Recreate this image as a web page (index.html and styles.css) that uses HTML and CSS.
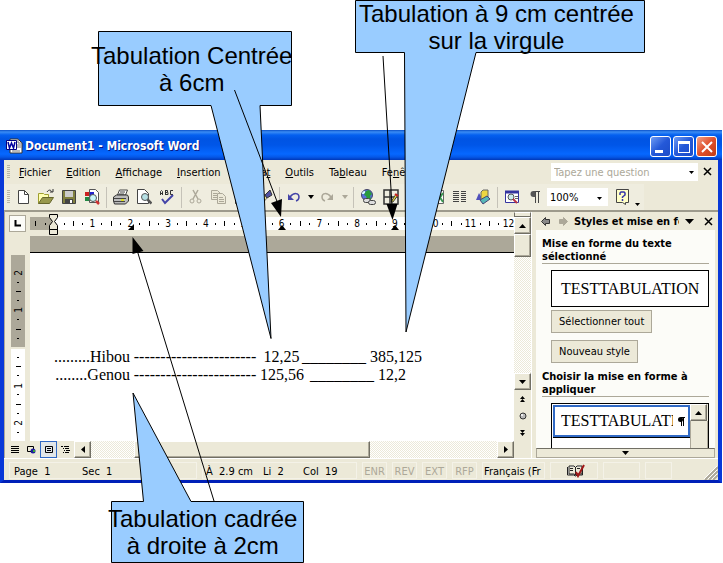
FILE: index.html
```html
<!DOCTYPE html>
<html lang="fr">
<head>
<meta charset="utf-8">
<title>Document1 - Microsoft Word</title>
<link rel="stylesheet" href="styles.css">
</head>
<body>
<main class="scene">
<section class="window">
  <header class="titlebar">
    <svg class="app-icon" width="17" height="16" viewBox="0 0 17 16"><path d="M4 1h8l4 4v10H4z" fill="#fff" stroke="#333"/><path d="M12 1v4h4M11 7h4M11 9h4M6 13h8" fill="none" stroke="#777"/><path d="M0.5 2.500h10v9h-10z" fill="#fff" stroke="#000080"/><path d="M2 4l1.500 6L5.500 5l2 5L9 4" fill="none" stroke="#0000a0" stroke-width="1.500"/></svg>
    <h1>Document1 - Microsoft Word</h1>
    <div class="caption-buttons">
      <button class="caption" aria-label="Réduire"><svg width="20" height="20"><path d="M4 13h8v3H4z" fill="#fff"/></svg></button>
      <button class="caption" aria-label="Agrandir"><svg width="20" height="20"><path d="M4 4h12v12H4zM5 7v8h10V7z" fill="#fff" fill-rule="evenodd"/></svg></button>
      <button class="caption close" aria-label="Fermer"><svg width="20" height="20"><path d="M5 5l10 10M15 5L5 15" stroke="#fff" stroke-width="2"/></svg></button>
    </div>
  </header>

  <nav class="menubar">
    <i class="grip"></i>
    <a href="#"><u>F</u>ichier</a><a href="#"><u>E</u>dition</a><a href="#"><u>A</u>ffichage</a><a href="#"><u>I</u>nsertion</a><a href="#">Forma<u>t</u></a><a href="#"><u>O</u>utils</a><a href="#">Ta<u>b</u>leau</a><a href="#">Fe<u>n</u>être</a>
    <div class="ask"><input type="text" placeholder="Tapez une question" aria-label="Tapez une question"><svg width="14" height="17"><path d="M5 8h5l-2.500 3z"/></svg></div>
    <button class="plain doc-close" aria-label="Fermer le document"><svg width="10" height="10"><path d="M1 1l7 7M8 1L1 8" stroke="#000" stroke-width="1.500"/></svg></button>
  </nav>

  <div class="toolbar">
    <i class="grip"></i>
    <button class="tool" aria-label="Nouveau"><svg width="16" height="16"><path d="M3.500 1.500h6l4 4v9h-10z" fill="#fff" stroke="#444"/><path d="M9.500 1.500v4h4" fill="none" stroke="#444"/></svg></button>
    <button class="tool" aria-label="Ouvrir"><svg width="16" height="16"><path d="M.5 14.500v-10h5l1 1h4v3" fill="#ffffb0" stroke="#a0a030"/><path d="M.5 14.500l4-6h11l-4 6z" fill="#98984c" stroke="#66662c"/><path d="M9 3c2-3 4-2 5 0M12 3h3V0" fill="none" stroke="#333"/></svg></button>
    <button class="tool" aria-label="Enregistrer"><svg width="16" height="16"><path d="M1.500 1.500h13v13h-13z" fill="#808040" stroke="#444"/><path d="M4 2h8v6H4z" fill="#ccc"/><path d="M4 10h8v4H4z" fill="#444"/><path d="M9 11h2v3H9z" fill="#fff"/></svg></button>
    <button class="tool" aria-label="Rechercher"><svg width="16" height="16"><path d="M5.500.5h6l3 3v10h-9z" fill="#fff" stroke="#555"/><path d="M1 3h4v4H1z" fill="#c22"/><path d="M6 3h4v4H6z" fill="#22c"/><path d="M1 8h4v4H1z" fill="#284"/><path d="M6 8h4v4H6z" fill="#fd3"/><circle cx="9" cy="9" r="3.500" fill="#c8f6f8" stroke="#555"/><path d="M12 12l3 3" stroke="#c33" stroke-width="2.500"/></svg></button>
    <i class="sep"></i>
    <button class="tool" aria-label="Imprimer"><svg width="16" height="16"><path d="M4.500 6l2-5h8l-2 5z" fill="#fff" stroke="#444"/><path d="M7 3h5M6 5h5" stroke="#444"/><path d="M.5 8l3-2h11l1 2v4l-3 3H1.500l-1-3z" fill="#bbb" stroke="#333"/><path d="M1 9.500h12M1 12.500h11" stroke="#444"/><path d="M8 11h3" stroke="#dd2" stroke-width="2"/></svg></button>
    <button class="tool" aria-label="Aperçu avant impression"><svg width="16" height="16"><path d="M1.500.5h7l4 4v10h-11z" fill="#fff" stroke="#444"/><circle cx="9" cy="8" r="3.500" fill="#b6e0e4" stroke="#555"/><path d="M11.500 10.500l4 4" stroke="#555" stroke-width="2.500"/></svg></button>
    <button class="tool" aria-label="Orthographe"><svg width="16" height="16"><path d="M1.500 6V2.500l1-1 1 1V6M1.500 4.500h2M6.500 1.500h2v2h-2v2h2.500v-2M6.500 1v5M14 1.500h-2.500v4H14" fill="none" stroke="#333"/><path d="M3 10l3 4 8-8" fill="none" stroke="#4444a8" stroke-width="2"/></svg></button>
    <i class="sep"></i>
    <button class="tool" aria-label="Couper"><svg width="16" height="16" fill="none" stroke="#aca899"><path d="M5 1l5 9M10 1L5 10" stroke-width="1.500"/><circle cx="4" cy="12" r="2"/><circle cx="11" cy="12" r="2"/></svg></button>
    <button class="tool" aria-label="Copier"><svg width="16" height="16" fill="#ece9d8" stroke="#aca899"><path d="M.5 1.500h6l3 3v6h-9zM2 4.500h4M2 6.500h5M2 8.500h5"/><path d="M6.500 4.500h5l3 3v7h-8zM8 8.500h4M8 10.500h5M8 12.500h5"/></svg></button>
    <button class="tool" aria-label="Coller"><svg width="16" height="16"><path d="M1.500 2.500h10v12h-10z" fill="#98984c" stroke="#444"/><path d="M6.500 6.500h8v8h-8z" fill="#fff" stroke="#448"/></svg></button>
    <button class="tool" aria-label="Reproduire la mise en forme"><svg width="16" height="16"><path d="M0 7l6-3 4 5-5 6z" fill="#eee38a" stroke="#777"/><path d="M2 7l5 6M4 6l4 5" stroke="#8b842b"/><path d="M8 6l5-5 2 5-5 3z" fill="#5050a0" stroke="#333"/></svg></button>
    <i class="sep"></i>
    <button class="tool" aria-label="Annuler"><svg width="16" height="16"><path d="M4 8c4-5 9-4 9 0q0 3-3 4" fill="none" stroke="#4444a8" stroke-width="1.500"/><path d="M2 5v6h6z" fill="#4444a8"/></svg></button>
    <button class="arrow" aria-label="Liste annuler"><svg width="6" height="4"><path d="M0 0h6L3 4z"/></svg></button>
    <button class="tool" aria-label="Rétablir"><svg width="16" height="16"><path d="M11 8c-4-5-9-4-9 0q0 3 3 4" fill="none" stroke="#aca899" stroke-width="1.500"/><path d="M13 5v6H7z" fill="#aca899"/></svg></button>
    <button class="arrow off" aria-label="Liste rétablir"><svg width="6" height="4"><path d="M0 0h6L3 4z"/></svg></button>
    <i class="sep"></i>
    <button class="tool" aria-label="Lien hypertexte"><svg width="16" height="16"><circle cx="7" cy="6" r="5.500" fill="#5870dc" stroke="#446"/><path d="M6 2l3-1 3 4-2 2 1 3-4 0-1-3-2-1z" fill="#289c3c"/><path d="M3 5q0-2 2-2" fill="none" stroke="#dff" stroke-width="2"/><rect x="3.500" y="9.500" width="7" height="4" rx="2" fill="#ddd" stroke="#444"/><rect x="8.500" y="11.500" width="7" height="4" rx="2" fill="#ddd" stroke="#444"/></svg></button>
    <button class="tool" aria-label="Tableaux et bordures"><svg width="16" height="16"><path d="M1 1h14v14H1zM7 1v14M1 8h14" fill="none" stroke="#333" stroke-width="1.500"/><path d="M8 13l5-8 2 1-5 7z" fill="#ed3" stroke="#444"/><path d="M12 5l3 2" stroke="#c22" stroke-width="2"/></svg></button>
    <button class="tool" aria-label="Insérer un tableau"><svg width="16" height="16"><path d="M1.500 1.500h13v13h-13zM1 6h14M1 10h14M6 1v14M10 1v14" fill="none" stroke="#666"/></svg></button>
    <button class="tool" aria-label="Feuille Excel"><svg width="16" height="16"><path d="M1.500 1.500h13v13h-13z" fill="#fff" stroke="#666"/><path d="M8 4l6 9M14 4l-6 9" stroke="#399852" stroke-width="2"/></svg></button>
    <button class="tool" aria-label="Colonnes"><svg width="16" height="16"><path d="M1 2.500h6M1 4.500h6M1 6.500h6M1 8.500h6M1 10.500h6M1 12.500h6M9 2.500h5M9 4.500h5M9 6.500h5M9 8.500h5M9 10.500h5M9 12.500h5" stroke="#444"/></svg></button>
    <button class="tool" aria-label="Dessin"><svg width="16" height="16"><path d="M1 11l3-7 4 7z" fill="#5050bb"/><path d="M6 3l2-2h5v8l-2 2H6z" fill="#eed641" stroke="#666"/><path d="M5 11l7-4 3 3-7 5z" fill="#56b8b8" stroke="#447"/></svg></button>
    <i class="sep"></i>
    <button class="tool" aria-label="Explorateur de documents"><svg width="16" height="16"><path d="M1.500 2.500h13v11h-13z" fill="#fff" stroke="#3434a0"/><path d="M1 3h14" stroke="#3434a0" stroke-width="3"/><circle cx="7" cy="8" r="3" fill="#ccebed" stroke="#555"/><path d="M9 10l4 4" stroke="#b34" stroke-width="2"/><path d="M11 7.500h3M11 9.500h3" stroke="#666"/></svg></button>
    <button class="tool" aria-label="Afficher/Masquer"><svg width="16" height="16"><path d="M13 2.500H6.500M8.500 2v12M11.500 2v12" fill="none" stroke="#444"/><path d="M8.500 2v6H6.500a3 3 0 0 1 0-6z" fill="#555"/></svg></button>
    <label class="zoom"><select aria-label="Zoom"><option>100%</option></select><svg width="11" height="17"><path d="M2 8h5l-2.500 3z"/></svg></label>
    <button class="tool" aria-label="Aide"><svg width="16" height="16"><path d="M2.500.5h12v13h-3v2l-3-2h-6z" fill="#ffffc8" stroke="#444"/><path d="M6 6V4l1-1h3l1 1v2L8.500 8v1M8.500 10v2" fill="none" stroke="#3434a8" stroke-width="1.500"/></svg></button>
    <button class="arrow low" aria-label="Options"><svg width="5" height="3"><path d="M0 0h5L2.500 3z"/></svg></button>
  </div>

  <div class="workspace">
    <div class="editor">
      <div class="ruler-row">
        <button class="tab-kind" aria-label="Tabulation gauche"><svg width="8" height="8"><path d="M1.500 0v5.500H7" fill="none" stroke="#000" stroke-width="2"/></svg></button>
        <div class="ruler">
          <svg class="indent" width="9" height="22"><path d="M.5.5h8v3l-3 4 3 4v4h-8v-4l3-4-3-4zM.5 15.500h8v5h-8z" fill="#ece9d8" stroke="#000"/></svg>
          <b></b><i></i><span></span><i></i><b></b><i></i><span>1</span><i></i><b></b><i></i><span class="stop">2</span><i></i><b></b><i></i><span>3</span><i></i><b></b><i></i><span>4</span><i></i><b></b><i></i><span>5</span><i></i><b></b><i></i><span class="stop center">6</span><i></i><b></b><i></i><span>7</span><i></i><b></b><i></i><span>8</span><i></i><b></b><i></i><span class="stop center">9</span><i></i><b></b><i></i><span>10</span><i></i><b></b><i></i><span>11</span><i></i><b></b><i></i><span>12</span>
        </div>
      </div>
      <div class="page-row">
        <div class="vruler">
          <span>2</span><i></i><b></b><i></i><span>1</span><i></i><b></b><i></i><span></span><i></i><b></b><i></i><span>1</span><i></i><b></b><i></i><span>2</span><i></i>
        </div>
        <article class="page">
          <p><span class="right">.........Hibou</span><span class="leader">-----------------------</span><span class="middle">12,25</span><span class="whole">________ 385</span><span>,125</span></p>
          <p><span class="right">........Genou</span><span class="leader">-----------------------</span><span class="middle">125,56</span><span class="whole">________ 12</span><span>,2</span></p>
        </article>
      </div>
      <div class="bottom-row">
        <button class="view" aria-label="Normal"><svg width="8" height="8"><path d="M0 .5h8M0 2.500h8M0 4.500h8M0 6.500h8" stroke="#000"/></svg></button>
        <button class="view" aria-label="Web"><svg width="9" height="9"><path d="M.5 1.500h6v5h-6z" fill="none" stroke="#000"/><circle cx="6" cy="6" r="2.500" fill="#1c1c9c"/><path d="M6 5h2v2H6z" fill="#3a3"/></svg></button>
        <button class="view on" aria-label="Page"><svg width="8" height="8"><path d="M.5.500h7v6h-7zM2 2.500h4M2 4.500h4" fill="none" stroke="#000"/></svg></button>
        <button class="view" aria-label="Plan"><svg width="9" height="8"><path d="M0 .5h2M3 .5h5M2 2.500h1M4 2.500h4M3 4.500h1M5 4.500h4M2 6.500h1M4 6.500h4" stroke="#000"/></svg></button>
        <button class="sb" aria-label="Défiler à gauche"><svg width="4" height="7"><path d="M4 0v7L0 3.500z"/></svg></button>
        <div class="htrack"><i class="hthumb"></i></div>
        <button class="sb" aria-label="Défiler à droite"><svg width="4" height="7"><path d="M0 0v7l4-3.500z"/></svg></button>
      </div>
    </div>
    <div class="vscroll">
      <i class="split"></i>
      <button class="sb" aria-label="Défiler vers le haut"><svg width="7" height="4"><path d="M0 4h7L3.500 0z"/></svg></button>
      <div class="vtrack"><i class="vthumb"></i></div>
      <button class="sb" aria-label="Défiler vers le bas"><svg width="7" height="4"><path d="M0 0h7L3.500 4z"/></svg></button>
      <button class="plain hop" aria-label="Page précédente"><svg width="5" height="6"><path d="M0 3h5L2.500 0zM0 6h5L2.500 3z"/></svg></button>
      <button class="plain hop" aria-label="Objet"><svg width="8" height="8"><circle cx="4" cy="4" r="3" fill="#bbb" stroke="#333"/><circle cx="3" cy="3" r="1" fill="#fff"/></svg></button>
      <button class="plain hop" aria-label="Page suivante"><svg width="5" height="6"><path d="M0 0h5L2.500 3zM0 3h5L2.500 6z"/></svg></button>
    </div>
    <aside class="pane">
      <header class="pane-head">
        <svg width="9" height="9"><path d="M.5 4.500l4-4v2h4v4h-4v2z" fill="#888" stroke="#333"/></svg>
        <svg width="9" height="9"><path d="M8.500 4.500l-4-4v2h-4v4h4v2z" fill="#aca899" stroke="#aca899"/></svg>
        <h2>Styles et mise en forme</h2>
        <svg width="10" height="5"><path d="M0 0h9L4.500 5z"/></svg>
        <button class="plain" aria-label="Fermer le volet"><svg width="9" height="9"><path d="M1 1l7 7M8 1L1 8" stroke="#000" stroke-width="1.500"/></svg></button>
      </header>
      <div class="pane-body">
        <h3>Mise en forme du texte sélectionné</h3>
        <div class="sample">TESTTABULATION</div>
        <button class="action">Sélectionner tout</button>
        <button class="action">Nouveau style</button>
        <h3>Choisir la mise en forme à appliquer</h3>
        <div class="styles">
          <div class="choices"><div class="choice"><span>TESTTABULATION</span><svg width="7" height="9"><path d="M7 .5H3M3.500 0v9M5.500 0v9" stroke="#000" fill="none"/><circle cx="2.500" cy="2.500" r="2.500"/></svg></div></div>
          <div class="mini-scroll"><button class="sb" aria-label="Styles précédents"><svg width="7" height="4"><path d="M0 4h7L3.500 0z"/></svg></button><i></i></div>
        </div>
      </div>
      <button class="more" aria-label="Suite"><svg width="7" height="4"><path d="M0 0h7L3.500 4z"/></svg></button>
    </aside>
  </div>

  <footer class="status">
    <div class="cell place"><span>Page&nbsp; 1</span><span>Sec&nbsp; 1</span></div>
    <div class="cell cursor"><span>À&nbsp; 2.9 cm</span><span>Li&nbsp; 2</span><span>Col&nbsp; 19</span></div>
    <div class="cell mode">ENR</div><div class="cell mode">REV</div><div class="cell mode">EXT</div><div class="cell mode">RFP</div>
    <div class="cell lang">Français (Fr</div>
    <div class="cell book"><svg width="19" height="14"><path d="M1.500 3v8h6l2 1 2-1h5V3M3 2h5l1.500 1.500L11 2h5v8h-5l-1.500 1L8 10H3zM9.500 3v8M4 4.500h3M4 6.500h3M11 4.500h3" fill="#fff" stroke="#222"/><path d="M10 8l2 4 6-11" fill="none" stroke="#a01818" stroke-width="2"/></svg></div>
    <div class="cell blank"></div><div class="cell blank small"></div>
    <svg class="resize" width="14" height="14"><path d="M1 14L14 1M5 14l9-9M9 14l5-5" stroke="#aca899" stroke-width="2"/><path d="M0 13L13 0M4 13l9-9M8 13l5-5" stroke="#fff"/></svg>
  </footer>
</section>

<svg class="callouts" width="723" height="563" aria-hidden="true">
  <g fill="#99ccff" stroke="#000">
    <path d="M98.500 31.500h193v74H260l11 233-60-233H98.500z"/>
    <path d="M355.500.5h289v52H476L406 332l-1.500-279.500h-49z"/>
    <path d="M111.500 501.500h32L133 393l58 108.500h112.500v61h-192z"/>
  </g>
  <g fill="none" stroke="#000"><path d="M234.500 90L278 204M383 56l9 150M214 501L137 250"/></g>
  <path d="M281 217l-10-14 11-4zM392.500 220l-6-16h11zM132.500 237v17l11-3z"/>
</svg>
<p class="note note-center">Tabulation Centrée<br>à 6cm</p>
<p class="note note-decimal">Tabulation à 9 cm centrée<br>sur la virgule</p>
<p class="note note-right">Tabulation cadrée<br>à droite à 2cm</p>
</main>
</body>
</html>
```
FILE: styles.css
```css
* { box-sizing: border-box; }
body { margin: 0; background: #fff; overflow: hidden; }
h1, h2, h3, p { margin: 0; }
i, b { font-style: normal; }
svg { display: block; flex: none; }
button { padding: 0; border: 0; background: none; font: inherit; color: inherit; }

.scene { position: relative; padding: 130px 1px 80px 0; }
.window {
  border: solid #0838d8;
  border-width: 0 4px 3px;
  border-bottom-color: #0020b8;
  background: #ece9d8;
  color: #000;
  font: 11px/13px "DejaVu Sans Condensed", "Noto Sans", sans-serif;
}

.titlebar {
  display: flex;
  align-items: center;
  height: 30px;
  margin: 0 -4px;
  padding: 2px 5px 0 6px;
  background: linear-gradient(#0a50c8, #3a8cf4 2px, #0460f0 5px, #0054e3 9px, #0056e8 15px, #0668ff 24px, #0558e8 27px, #0038b8);
}
.titlebar h1 { flex: 1; margin-left: 2px; color: #fff; font: bold 12px/18px "DejaVu Sans Condensed", sans-serif; text-shadow: 1px 1px #0a1883; white-space: nowrap; }
.caption-buttons { display: flex; gap: 2px; }
.caption { width: 21px; height: 21px; border: 1px solid #fff; border-radius: 3px; background: linear-gradient(135deg, #6f9cf4, #2458d8 50%, #1c4cc8); }
.caption svg { width: 19px; height: 19px; }
.caption.close { background: linear-gradient(135deg, #f0a088, #e0502c 50%, #c03c14); }

.menubar { display: flex; align-items: center; height: 24px; padding-left: 3px; }
.menubar a { margin-left: 15px; color: #000; text-decoration: none; }
.grip { flex: none; width: 3px; height: 14px; background: repeating-linear-gradient(#b8b4a4 0 1px, transparent 1px 2px); }
.menubar .grip { margin-right: -6px; }
.ask { display: flex; width: 147px; height: 18px; margin-left: auto; background: #fff; }
.ask input { flex: 1; min-width: 0; border: 0; padding: 0 3px; background: none; font: inherit; }
.ask input::placeholder { color: #aca899; opacity: 1; }
.doc-close { margin: 0 5px; }

.toolbar { display: flex; align-items: center; height: 26px; padding-left: 3px; background: linear-gradient(90deg, #efeddf 640px, #ece9d8 640px); }
.toolbar .grip { margin-right: 1px; }
.tool { display: grid; place-items: center; flex: none; width: 23px; height: 22px; }
.arrow { display: grid; place-items: center; flex: none; width: 11px; height: 22px; }
.arrow.off { fill: #aca899; }
.arrow.low { width: 8px; align-items: end; padding-bottom: 2px; }
.sep { flex: none; width: 1px; height: 21px; margin: 0 2px 0 3px; background: #c5c2b8; }
.zoom { display: flex; width: 61px; height: 18px; margin: 0 2px 0 1px; background: #fff; padding-right: 2px; align-items: center; }
.zoom select { flex: 1; min-width: 0; border: 0; padding: 0 3px; appearance: none; background: none; font: inherit; color: #000; }

.workspace { display: flex; height: 248px; border-top: 2px solid #9d9a8c; border-left: 1px solid #aca899; }
.editor { display: flex; flex: 1; flex-direction: column; min-width: 0; }
.ruler-row { display: flex; height: 24px; padding: 3px 0 0 4px; }
.tab-kind { display: grid; place-items: center; width: 17px; height: 17px; border: 1px solid #aca899; background: #fcfcf8; }
.ruler { position: relative; display: flex; flex: 1; align-items: center; height: 13px; margin: 2px 0 0 4px; padding: 0 1px; background: linear-gradient(90deg, #aca899 24px, #fff 24px); font-size: 10px; line-height: 13px; }
.ruler > span, .ruler > i, .ruler > b { display: flex; flex: 1 1 0; justify-content: center; min-width: 0; }
.ruler > i::before { content: ""; width: 1px; height: 2px; background: #000; }
.ruler > b::before { content: ""; width: 1px; height: 5px; background: #000; }
.indent { position: absolute; left: 19px; top: -3px; z-index: 1; }
.stop { position: relative; }
.stop::after { content: ""; position: absolute; left: 2px; bottom: 0; border: solid transparent; border-width: 0 0 6px 6px; border-bottom-color: #000; }
.stop.center::after { border-width: 0 4px 5px; border-bottom-color: #000; left: 1px; }

.page-row { display: flex; flex: 1; min-height: 0; }
.vruler { display: flex; flex-direction: column; width: 14px; margin: 19px 5px 0 6px; padding: 13px 0 4px; background: linear-gradient(#aca899 92px, #ece9d8 92px 94px, #fff 94px); font-size: 10px; }
.vruler > * { display: flex; flex: 1 1 0; min-height: 0; align-items: center; justify-content: center; }
.vruler > span { writing-mode: sideways-lr; }
.vruler > i::before { content: ""; width: 2px; height: 1px; background: #000; }
.vruler > b::before { content: ""; width: 5px; height: 1px; background: #000; }
.page { flex: 1; margin-top: 16px; padding: 95px 0 0 24px; border-top: 1px solid #000; background: #fff; font: 16px/18px "Liberation Serif", serif; box-shadow: 0 -16px #aca899; }
.page p { display: flex; white-space: pre; }
.right { width: 76px; text-align: right; }
.leader { width: 130px; text-align: center; overflow: hidden; }
.middle { width: 43px; text-align: center; }
.whole { width: 91px; display: flex; justify-content: flex-end; }

.bottom-row { display: flex; height: 17px; padding-left: 1px; }
.view { display: grid; place-items: center; width: 17px; border: 1px solid transparent; }
.view.on { border-color: #316ac5; background: #e1e6e8; }
.sb { display: grid; place-items: center; flex: none; width: 17px; height: 17px; border: 1px solid; border-color: #fff #716f64 #716f64 #fff; box-shadow: inset -1px -1px #aca899; background: #ece9d8; }
.htrack, .vtrack { flex: 1; min-height: 0; background: repeating-conic-gradient(#fff 0 25%, #ece9d8 0 50%) 0 0 / 2px 2px; }
.htrack { padding-left: 43px; }
.hthumb { display: block; width: 65%; height: 17px; border: 1px solid; border-color: #fff #716f64 #716f64 #fff; box-shadow: inset -1px -1px #aca899; background: #ece9d8; }

.vscroll { display: flex; flex-direction: column; width: 17px; }
.split { height: 5px; border: 1px solid #716f64; border-top-color: #fff; }
.vthumb { display: block; height: 23px; border: 1px solid; border-color: #fff #716f64 #716f64 #fff; box-shadow: inset -1px -1px #aca899; background: #ece9d8; }
.hop { display: grid; place-items: center; height: 17px; }
.vscroll .hop:last-child { margin-bottom: 17px; }

.pane { display: flex; flex-direction: column; width: 187px; padding: 0 3px 0 4px; border-left: 1px solid #fff; }
.pane-head { display: flex; align-items: center; height: 18px; gap: 9px; padding: 0 2px 0 5px; }
.pane-head h2 { flex: 1; margin: 0 -3px; overflow: hidden; font: inherit; font-weight: bold; white-space: nowrap; }
.pane-body { flex: 1; min-height: 0; overflow: hidden; padding: 7px 6px 0; background: #fcfcf8; }
.pane-body h3 { border-bottom: 1px solid #aca899; font: inherit; font-weight: bold; }
.sample { height: 37px; margin: 6px 0 3px 9px; padding-left: 9px; border: 1px solid #000; background: #fff; font: 16px/35px "Liberation Serif", serif; overflow: hidden; }
.action { display: block; height: 23px; margin: 0 0 7px 9px; padding: 0 7px; border: 1px solid #aca899; background: #ece9d8; }
.styles { display: flex; height: 60px; margin: 6px 0 0 9px; border: 1px solid #000; background: #fff; }
.choices { flex: 1; min-width: 0; padding: 1px 0 0 1px; }
.choice { display: flex; align-items: center; height: 32px; padding: 0 3px 0 6px; border: 2px solid #316ac5; box-shadow: 0 1px #000; font: 16px/28px "Liberation Serif", serif; }
.choice span { flex: 1; overflow: hidden; margin-right: 5px; }
.mini-scroll { width: 18px; background: #ece9d8; }
.mini-scroll i { display: block; height: 40px; border: 1px solid #aca899; border-width: 0 1px; }
.more { display: grid; place-items: center; height: 10px; border: 1px solid #aca899; border-top-color: #716f64; background: #ece9d8; }

.status { display: flex; gap: 5px; height: 22px; padding: 3px 0 1px 5px; border-top: 1px solid #fff; white-space: nowrap; }
.cell { border: 1px solid #f4f2e8; padding-left: 3px; line-height: 17px; }
.place { display: flex; width: 188px; padding-left: 4px; }
.place span { width: 68px; }
.cursor { display: flex; flex: 1; }
.cursor span { width: 57px; }
.cursor span + span { width: 40px; }
.mode { width: 25px; padding: 0; color: #aca899; text-align: center; }
.lang { width: 63px; padding-left: 1px; }
.book { display: grid; place-items: center; width: 48px; }
.blank { width: 37px; }
.blank.small { width: 27px; }
.resize { margin: 4px 0 0 27px; }

.callouts { position: absolute; left: 0; top: 0; }
.note { position: absolute; font: 24px/27px "Liberation Sans", sans-serif; text-align: center; white-space: nowrap; }
.note-center { left: 91px; top: 42px; }
.note-decimal { left: 359px; top: 0; }
.note-right { left: 108px; top: 505px; }
```
